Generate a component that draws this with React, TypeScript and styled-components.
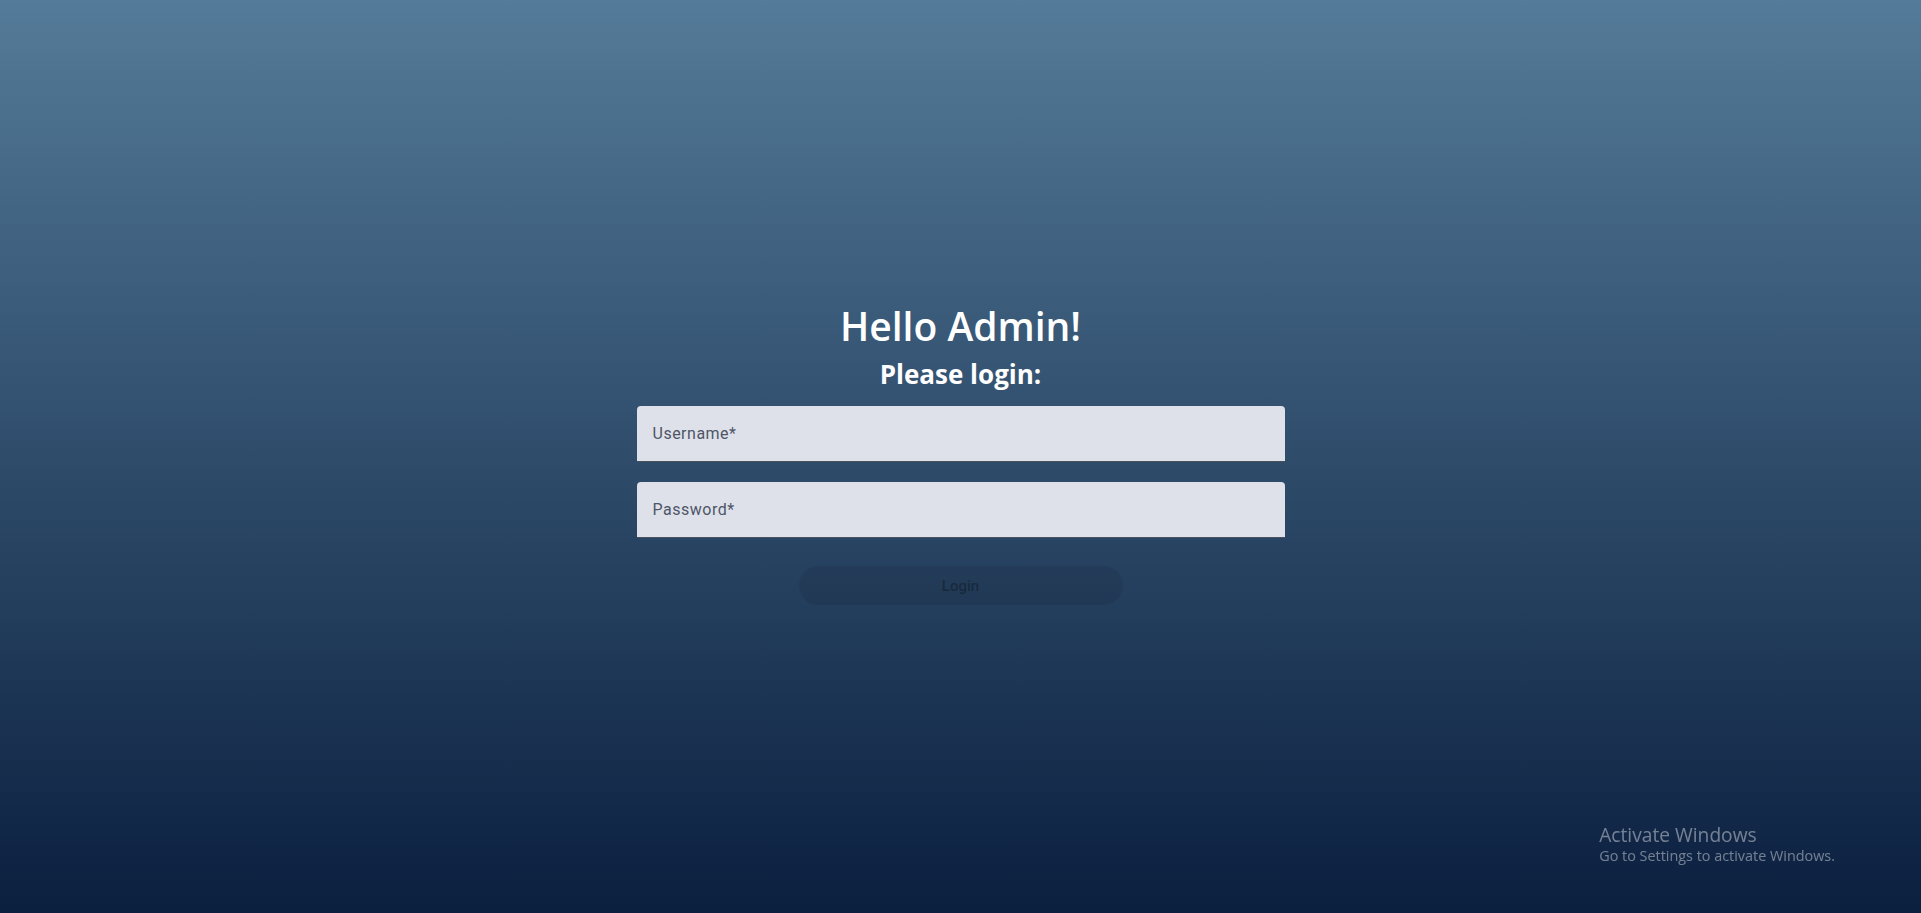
import React from "react";
import styled, { createGlobalStyle } from "styled-components";

const GlobalStyle = createGlobalStyle`
  html, body {
    margin: 0;
    padding: 0;
    height: 100%;
  }
  body {
    font-family: "Open Sans", "Noto Sans", sans-serif;
  }
  #root {
    min-height: 100%;
  }
`;

const Page = styled.main`
  box-sizing: border-box;
  min-height: 100vh;
  padding-top: 302px;
  display: flex;
  flex-direction: column;
  align-items: center;
  background: linear-gradient(180deg, #547b99 0%, #2f4c6b 50%, #0b1f3f 100%);
`;

const Title = styled.h1`
  margin: 0;
  font-family: "Open Sans", "Noto Sans", sans-serif;
  font-weight: 600;
  font-size: 39px;
  line-height: 48px;
  color: #ffffff;
`;

const Subtitle = styled.h2`
  margin: 8px 0 0;
  font-family: "Open Sans", "Noto Sans", sans-serif;
  font-weight: 700;
  font-size: 26px;
  line-height: 32px;
  color: #ffffff;
`;

const Form = styled.form`
  margin-top: 16px;
  width: 648px;
  display: flex;
  flex-direction: column;
  align-items: center;
  gap: 20px;
`;

const Field = styled.label`
  box-sizing: border-box;
  width: 100%;
  height: 56px;
  padding: 16px 16px 0;
  display: flex;
  align-items: flex-start;
  background: #dfe1ea;
  border-radius: 4px 4px 0 0;
  border-bottom: 1px solid #4a505c;
  cursor: text;
`;

const FieldLabel = styled.span`
  font-family: Roboto, "Liberation Sans", sans-serif;
  font-size: 16px;
  line-height: 24px;
  letter-spacing: 0.5px;
  color: #4d5566;
`;

const LoginButton = styled.button`
  margin-top: 8px;
  width: 324px;
  height: 39px;
  border: none;
  border-radius: 20px;
  background: rgba(0, 0, 0, 0.08);
  color: rgba(0, 0, 0, 0.3);
  font-family: Roboto, "Liberation Sans", sans-serif;
  font-weight: 500;
  font-size: 15px;
  line-height: 24px;
  cursor: default;
`;

const Watermark = styled.div`
  position: fixed;
  right: 86px;
  bottom: 47px;
  display: flex;
  flex-direction: column;
  font-family: "Open Sans", "Noto Sans", sans-serif;
  color: rgba(255, 255, 255, 0.42);
  pointer-events: none;
`;

const WatermarkTitle = styled.span`
  font-size: 19.2px;
  line-height: 23px;
`;

const WatermarkText = styled.span`
  font-size: 14.4px;
  line-height: 20px;
`;

export default function App() {
  return (
    <>
      <GlobalStyle />
      <Page>
        <Title>Hello Admin!</Title>
        <Subtitle>Please login:</Subtitle>
        <Form onSubmit={(e) => e.preventDefault()}>
          <Field>
            <FieldLabel>Username*</FieldLabel>
          </Field>
          <Field>
            <FieldLabel>Password*</FieldLabel>
          </Field>
          <LoginButton type="submit" disabled>
            Login
          </LoginButton>
        </Form>
        <Watermark>
          <WatermarkTitle>Activate Windows</WatermarkTitle>
          <WatermarkText>Go to Settings to activate Windows.</WatermarkText>
        </Watermark>
      </Page>
    </>
  );
}
